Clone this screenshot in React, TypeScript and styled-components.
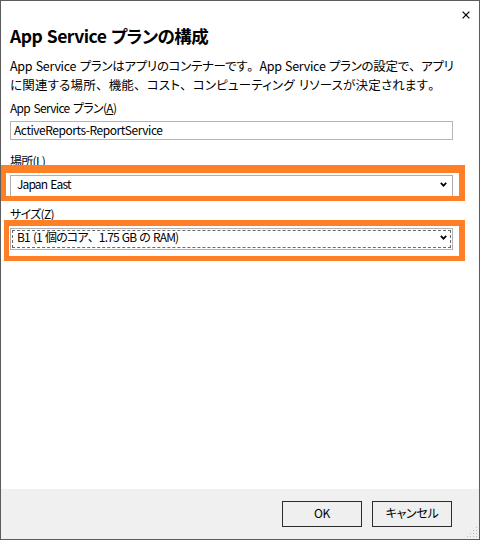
import React from "react";
import styled, { createGlobalStyle } from "styled-components";

const GlobalStyle = createGlobalStyle`
  html, body {
    margin: 0;
    padding: 0;
    background: #ffffff;
  }
  body {
    font-family: "Noto Sans CJK JP", "Noto Sans", sans-serif;
    font-feature-settings: "palt";
    color: #000000;
  }
`;

const Window = styled.div`
  position: relative;
  width: 480px;
  height: 540px;
  box-sizing: border-box;
  border: 1px solid #5c5c5c;
  background: #ffffff;
  display: flex;
  flex-direction: column;
  overflow: hidden;
`;

const TitleBar = styled.div`
  height: 23px;
  box-sizing: border-box;
  display: flex;
  justify-content: flex-end;
  align-items: flex-start;
  padding: 10px 9px 0 0;
`;

const CloseButton = styled.button`
  display: flex;
  padding: 0;
  margin: 0;
  border: none;
  background: transparent;
  cursor: default;
`;

const Body = styled.div`
  flex: 1;
  display: flex;
  flex-direction: column;
  padding: 0 26px 0 9px;
`;

const Title = styled.h1`
  margin: 0;
  font-size: 17.5px;
  font-weight: 700;
  line-height: 24px;
  letter-spacing: -0.5px;
  word-spacing: 1px;
`;

const Description = styled.p`
  margin: 8px 0 0;
  font-size: 12.5px;
  line-height: 19px;
  word-spacing: 1px;
  white-space: nowrap;
`;

const DescLine = styled.span<{ $ls: number }>`
  display: block;
  letter-spacing: ${(p) => p.$ls}px;
`;

/* full-width punctuation, as the dialog font keeps 、 and 。 at full width */
const Punct = styled.span`
  font-feature-settings: normal;
`;

const Field = styled.div<{ $mt: number }>`
  display: flex;
  flex-direction: column;
  margin-top: ${(p) => p.$mt}px;
`;

const Label = styled.label<{ $mb: number }>`
  font-size: 12px;
  line-height: 16px;
  letter-spacing: -0.7px;
  word-spacing: 1.5px;
  margin-bottom: ${(p) => p.$mb}px;
`;

const TextBox = styled.div`
  height: 19px;
  box-sizing: border-box;
  border: 1px solid #b4b4b4;
  padding: 0 3px;
  font-size: 12px;
  line-height: 15px;
  letter-spacing: -0.45px;
  white-space: nowrap;
`;

const SelectBox = styled.div`
  height: 22px;
  box-sizing: border-box;
  border: 1px solid #b0b0b0;
  display: flex;
  background: #ffffff;
`;

const SelectInner = styled.div<{ $focused?: boolean }>`
  flex: 1;
  margin: 1px;
  border: 1px dashed ${(p) => (p.$focused ? "#6a6a6a" : "transparent")};
  display: flex;
  align-items: center;
  justify-content: space-between;
  padding: 0 3px 4px 4px;
  font-size: 12px;
  line-height: 16px;
  letter-spacing: -0.85px;
  word-spacing: 1.2px;
  white-space: nowrap;
`;

const Footer = styled.div`
  height: 50px;
  box-sizing: border-box;
  background: #f0f0f0;
  display: flex;
  justify-content: flex-end;
  align-items: flex-start;
  gap: 10px;
  padding: 12px 27px 0 0;
`;

const DialogButton = styled.button`
  width: 80px;
  height: 26px;
  box-sizing: border-box;
  border: 1px solid #2b2b2b;
  background: #efefef;
  font-family: inherit;
  font-feature-settings: "palt";
  letter-spacing: -0.3px;
  font-size: 12px;
  line-height: 16px;
  color: #000;
  padding: 0 0 2px;
  margin: 0;
  cursor: default;
`;

const Annotation = styled.div<{
  $top: number;
  $left: number;
  $w: number;
  $h: number;
  $bw: string;
}>`
  position: absolute;
  top: ${(p) => p.$top}px;
  left: ${(p) => p.$left}px;
  width: ${(p) => p.$w}px;
  height: ${(p) => p.$h}px;
  box-sizing: border-box;
  border-style: solid;
  border-color: #ff7f27;
  border-width: ${(p) => p.$bw};
  pointer-events: none;
`;

const Grip = styled.svg`
  position: absolute;
  right: 1px;
  bottom: 1px;
`;

const CloseIcon = () => (
  <svg width="8" height="8" viewBox="0 0 8 8">
    <path d="M0.6 0.6L7.4 7.4M7.4 0.6L0.6 7.4" stroke="#000" strokeWidth="1.25" fill="none" />
  </svg>
);

const Chevron = () => (
  <svg width="7" height="5" viewBox="0 0 7 5">
    <polyline points="0.8,0.9 3.5,3.7 6.2,0.9" stroke="#000" strokeWidth="1.7" fill="none" />
  </svg>
);

const Select = ({ children, focused }: { children: React.ReactNode; focused?: boolean }) => (
  <SelectBox>
    <SelectInner $focused={focused}>
      <span>{children}</span>
      <Chevron />
    </SelectInner>
  </SelectBox>
);

const gripDots: Array<[number, number]> = [];
for (let r = 0; r < 4; r++) {
  for (let c = 0; c < 4; c++) {
    if (c + r >= 3) gripDots.push([c * 3 + 1, r * 3 + 1]);
  }
}

export default function App() {
  return (
    <>
      <GlobalStyle />
      <Window>
        <TitleBar>
          <CloseButton aria-label="閉じる">
            <CloseIcon />
          </CloseButton>
        </TitleBar>
        <Body>
          <Title>App Service プランの構成</Title>
          <Description>
            <DescLine $ls={-0.3}>
              App Service プランはアプリのコンテナーです<Punct>。</Punct>App Service プランの設定で<Punct>、</Punct>アプリ
            </DescLine>
            <DescLine $ls={0.2}>
              に関連する場所<Punct>、</Punct>機能<Punct>、</Punct>コスト<Punct>、</Punct>コンピューティング リソースが決定されます<Punct>。</Punct>
            </DescLine>
          </Description>
          <Field $mt={6}>
            <Label $mb={5}>
              App Service プラン(<u>A</u>)
            </Label>
            <TextBox>ActiveReports-ReportService</TextBox>
          </Field>
          <Field $mt={13}>
            <Label $mb={6}>
              場所(<u>L</u>)
            </Label>
            <Select>Japan East</Select>
          </Field>
          <Field $mt={9}>
            <Label $mb={6}>
              サイズ(<u>Z</u>)
            </Label>
            <Select focused>
              B1 (1 個のコア<Punct>、</Punct>1.75 GB の RAM)
            </Select>
          </Field>
        </Body>
        <Footer>
          <DialogButton>OK</DialogButton>
          <DialogButton>キャンセル</DialogButton>
        </Footer>
        <Annotation $top={164} $left={0} $w={464} $h={36} $bw="8px 6px 5px 5px" />
        <Annotation $top={219} $left={3} $w={461} $h={41} $bw="6px 6px 5px 5px" />
        <Grip width="12" height="12" viewBox="0 0 12 12">
          {gripDots.map(([x, y]) => (
            <rect key={`${x}-${y}`} x={x} y={y} width="1" height="1" fill="#b9b9b9" />
          ))}
        </Grip>
      </Window>
    </>
  );
}
